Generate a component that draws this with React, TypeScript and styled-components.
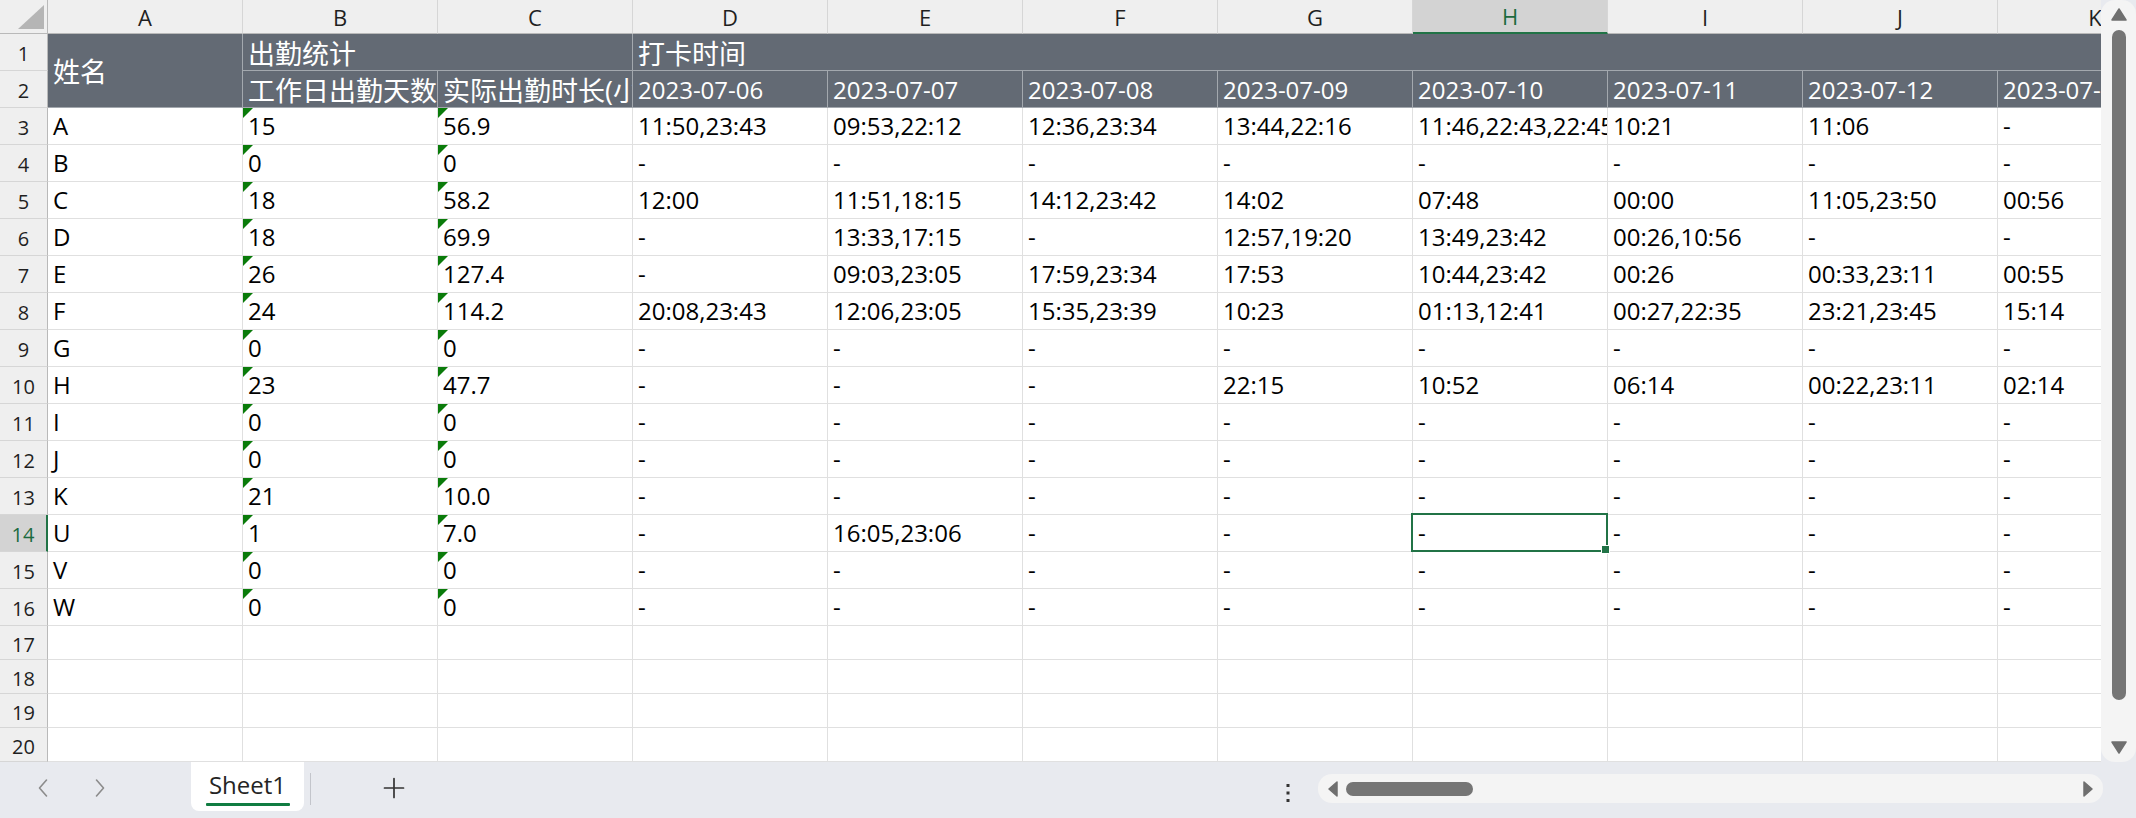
import React from "react";
import styled, { createGlobalStyle, css } from "styled-components";

const GlobalStyle = createGlobalStyle`
  html, body {
    margin: 0;
    padding: 0;
    width: 2136px;
    height: 818px;
    overflow: hidden;
    background: #ffffff;
  }
  body {
    font-family: "Open Sans", "Noto Sans CJK SC", sans-serif;
  }
  *, *::before, *::after { box-sizing: border-box; }
  button { font-family: inherit; }
`;

const GREEN = "#217346";

const Window = styled.div`
  width: 2136px;
  height: 818px;
  display: flex;
  flex-direction: column;
  background: #e8eaef;
`;

const Workspace = styled.div`
  display: flex;
  height: 762px;
  flex: none;
`;

const Viewport = styled.div`
  width: 2101px;
  height: 762px;
  overflow: hidden;
  background: #ffffff;
  flex: none;
`;

const Sheet = styled.div`
  display: grid;
  grid-template-columns: 48px repeat(11, 195px);
  grid-template-rows: 34px repeat(16, 37px) repeat(4, 34px);
  width: max-content;
`;

const cellBase = css`
  min-width: 0;
  overflow: hidden;
  white-space: nowrap;
`;

const Corner = styled.div`
  ${cellBase};
  position: relative;
  background: #efefef;
  border-right: 1px solid #b9b9b9;
  border-bottom: 1px solid #b9b9b9;
  &::after {
    content: "";
    position: absolute;
    right: 3px;
    bottom: 4px;
    border-left: 26px solid transparent;
    border-bottom: 24px solid #b5b5b5;
  }
`;

const ColHead = styled.div<{ $active?: boolean }>`
  ${cellBase};
  display: flex;
  align-items: center;
  justify-content: center;
  font-size: 22px;
  color: ${(p) => (p.$active ? "#1c6b3f" : "#1f1f1f")};
  background: ${(p) => (p.$active ? "#d3d3d3" : "#efefef")};
  border-right: 1px solid #d6d6d6;
  border-bottom: ${(p) => (p.$active ? `2px solid ${GREEN}` : "1px solid #b9b9b9")};
`;

const RowHead = styled.div<{ $active?: boolean }>`
  ${cellBase};
  display: flex;
  align-items: center;
  justify-content: center;
  font-size: 20px;
  padding-top: 3px;
  color: ${(p) => (p.$active ? "#1c6b3f" : "#1f1f1f")};
  background: ${(p) => (p.$active ? "#d3d3d3" : "#efefef")};
  border-right: ${(p) => (p.$active ? `2px solid ${GREEN}` : "1px solid #b9b9b9")};
  border-bottom: 1px solid #d6d6d6;
`;

const HeadCell = styled.div<{ $rows?: number; $cols?: number; $size?: number }>`
  ${cellBase};
  grid-row: span ${(p) => p.$rows ?? 1};
  grid-column: span ${(p) => p.$cols ?? 1};
  display: flex;
  align-items: center;
  padding-left: 5px;
  font-size: ${(p) => p.$size ?? 27}px;
  color: #ffffff;
  background: #636a74;
  border-right: 1px solid #a3a8ae;
  border-bottom: 1px solid #a3a8ae;
`;

const Cell = styled.div<{ $flag?: boolean; $selected?: boolean }>`
  ${cellBase};
  position: relative;
  padding-left: 5px;
  font-size: 24px;
  line-height: 36px;
  color: #000000;
  background: #ffffff;
  border-right: 1px solid #e0e0e0;
  border-bottom: 1px solid #e0e0e0;
  ${(p) =>
    p.$flag &&
    css`
      &::before {
        content: "";
        position: absolute;
        top: 0;
        left: 0;
        border-top: 10px solid #0a7b0a;
        border-right: 10px solid transparent;
      }
    `}
  ${(p) =>
    p.$selected &&
    css`
      overflow: visible;
      z-index: 2;
      &::after {
        content: "";
        position: absolute;
        top: -2px;
        left: -2px;
        right: -1px;
        bottom: -1px;
        border: 2px solid ${GREEN};
        pointer-events: none;
      }
    `}
`;

const CellText = styled.span`
  display: block;
  overflow: hidden;
  white-space: nowrap;
`;

const FillHandle = styled.span`
  position: absolute;
  right: -3px;
  bottom: -3px;
  width: 9px;
  height: 9px;
  background: ${GREEN};
  border: 1px solid #ffffff;
  z-index: 3;
`;

/* Vertical scrollbar */
const VScroll = styled.div`
  width: 35px;
  height: 762px;
  flex: none;
  display: flex;
  flex-direction: column;
  align-items: center;
  background: #f4f4f4;
  border-radius: 14px;
`;

const VThumb = styled.div`
  width: 14px;
  height: 670px;
  margin-top: 9px;
  border-radius: 7px;
  background: #757575;
`;

const Spacer = styled.div`
  flex: 1;
`;

const ArrowIcon = styled.svg<{ $mt?: number; $mb?: number }>`
  display: block;
  flex: none;
  margin-top: ${(p) => p.$mt ?? 0}px;
  margin-bottom: ${(p) => p.$mb ?? 0}px;
`;

/* Bottom bar */
const TabBar = styled.div`
  height: 56px;
  flex: none;
  display: flex;
  align-items: flex-start;
  background: #e8eaef;
`;

const NavGroup = styled.div`
  display: flex;
  height: 52px;
  align-items: center;
  gap: 17px;
  padding-left: 23px;
`;

const NavButton = styled.button`
  width: 40px;
  height: 40px;
  border: none;
  background: transparent;
  padding: 0;
  display: flex;
  align-items: center;
  justify-content: center;
  color: #8c8c8c;
`;

const SheetTab = styled.div`
  margin-left: 71px;
  width: 113px;
  height: 49px;
  background: #ffffff;
  border-radius: 0 0 8px 8px;
  display: flex;
  flex-direction: column;
  align-items: center;
  padding-top: 7px;
`;

const TabLabel = styled.span`
  font-size: 24px;
  line-height: 32px;
  color: #242424;
`;

const TabUnderline = styled.span`
  width: 84px;
  height: 3px;
  margin-top: 2px;
  background: #107c41;
  border-radius: 1px;
`;

const TabDivider = styled.div`
  width: 1px;
  height: 32px;
  margin-top: 11px;
  margin-left: 6px;
  background: #c3c5cb;
`;

const AddButton = styled.button`
  margin-left: 63px;
  width: 40px;
  height: 52px;
  border: none;
  background: transparent;
  padding: 0;
  display: flex;
  align-items: center;
  justify-content: center;
  color: #333333;
`;

const MoreButton = styled.button`
  width: 20px;
  height: 56px;
  margin-right: 20px;
  border: none;
  background: transparent;
  padding: 0;
  display: flex;
  align-items: center;
  justify-content: center;
  margin-top: 3px;
`;

const HScroll = styled.div`
  width: 785px;
  height: 29px;
  margin-top: 12px;
  margin-right: 33px;
  border-radius: 14px;
  background: #f4f4f4;
  display: flex;
  align-items: center;
  padding: 0 10px;
`;

const HThumb = styled.div`
  width: 127px;
  height: 14px;
  margin-left: 8px;
  border-radius: 7px;
  background: #757575;
`;

const dates = [
  "2023-07-06",
  "2023-07-07",
  "2023-07-08",
  "2023-07-09",
  "2023-07-10",
  "2023-07-11",
  "2023-07-12",
  "2023-07-13",
];

const letters = ["A", "B", "C", "D", "E", "F", "G", "H", "I", "J", "K"];

const dashes = ["-", "-", "-", "-", "-", "-", "-", "-"];

const rows: [string, string, string, string[]][] = [
  ["A", "15", "56.9", ["11:50,23:43", "09:53,22:12", "12:36,23:34", "13:44,22:16", "11:46,22:43,22:45", "10:21", "11:06", "-"]],
  ["B", "0", "0", dashes],
  ["C", "18", "58.2", ["12:00", "11:51,18:15", "14:12,23:42", "14:02", "07:48", "00:00", "11:05,23:50", "00:56"]],
  ["D", "18", "69.9", ["-", "13:33,17:15", "-", "12:57,19:20", "13:49,23:42", "00:26,10:56", "-", "-"]],
  ["E", "26", "127.4", ["-", "09:03,23:05", "17:59,23:34", "17:53", "10:44,23:42", "00:26", "00:33,23:11", "00:55"]],
  ["F", "24", "114.2", ["20:08,23:43", "12:06,23:05", "15:35,23:39", "10:23", "01:13,12:41", "00:27,22:35", "23:21,23:45", "15:14"]],
  ["G", "0", "0", dashes],
  ["H", "23", "47.7", ["-", "-", "-", "22:15", "10:52", "06:14", "00:22,23:11", "02:14"]],
  ["I", "0", "0", dashes],
  ["J", "0", "0", dashes],
  ["K", "21", "10.0", dashes],
  ["U", "1", "7.0", ["-", "16:05,23:06", "-", "-", "-", "-", "-", "-"]],
  ["V", "0", "0", dashes],
  ["W", "0", "0", dashes],
];

const SELECTED_ROW = 14;
const SELECTED_COL = "H";

const ChevronLeft = () => (
  <svg width="12" height="20" viewBox="0 0 12 20" fill="none">
    <path d="M9.5 2 L2.5 10 L9.5 18" stroke="currentColor" strokeWidth="1.6" strokeLinecap="round" strokeLinejoin="round" />
  </svg>
);

const ChevronRight = () => (
  <svg width="12" height="20" viewBox="0 0 12 20" fill="none">
    <path d="M2.5 2 L9.5 10 L2.5 18" stroke="currentColor" strokeWidth="1.6" strokeLinecap="round" strokeLinejoin="round" />
  </svg>
);

const PlusIcon = () => (
  <svg width="22" height="22" viewBox="0 0 22 22" fill="none">
    <path d="M11 1.5 V20.5 M1.5 11 H20.5" stroke="currentColor" strokeWidth="1.7" strokeLinecap="round" />
  </svg>
);

const DotsIcon = () => (
  <svg width="6" height="20" viewBox="0 0 6 20">
    <rect x="1.5" y="1" width="3" height="3" fill="#333" />
    <rect x="1.5" y="8.5" width="3" height="3" fill="#333" />
    <rect x="1.5" y="16" width="3" height="3" fill="#333" />
  </svg>
);

export default function App() {
  return (
    <>
      <GlobalStyle />
      <Window>
        <Workspace>
          <Viewport>
            <Sheet>
              <Corner />
              {letters.map((l) => (
                <ColHead key={l} $active={l === SELECTED_COL}>
                  {l}
                </ColHead>
              ))}

              <RowHead>1</RowHead>
              <HeadCell $rows={2}>姓名</HeadCell>
              <HeadCell $cols={2}>出勤统计</HeadCell>
              <HeadCell $cols={8}>打卡时间</HeadCell>

              <RowHead>2</RowHead>
              <HeadCell>工作日出勤天数</HeadCell>
              <HeadCell>实际出勤时长(小时)</HeadCell>
              {dates.map((d) => (
                <HeadCell key={d} $size={24}>
                  {d}
                </HeadCell>
              ))}

              {rows.map(([name, days, hours, times], i) => {
                const rowNo = i + 3;
                return (
                  <React.Fragment key={rowNo}>
                    <RowHead $active={rowNo === SELECTED_ROW}>{rowNo}</RowHead>
                    <Cell>{name}</Cell>
                    <Cell $flag>{days}</Cell>
                    <Cell $flag>{hours}</Cell>
                    {times.map((t, j) => {
                      const selected = rowNo === SELECTED_ROW && letters[j + 3] === SELECTED_COL;
                      return (
                        <Cell key={j} $selected={selected}>
                          <CellText>{t}</CellText>
                          {selected && <FillHandle />}
                        </Cell>
                      );
                    })}
                  </React.Fragment>
                );
              })}

              {[17, 18, 19, 20].map((r) => (
                <React.Fragment key={r}>
                  <RowHead>{r}</RowHead>
                  {letters.map((l) => (
                    <Cell key={l} />
                  ))}
                </React.Fragment>
              ))}
            </Sheet>
          </Viewport>
          <VScroll>
            <ArrowIcon $mt={8} width="16" height="13" viewBox="0 0 16 13">
              <path d="M8 1 L15 12 H1 Z" fill="#6f6f6f" stroke="#6f6f6f" strokeWidth="1.5" strokeLinejoin="round" />
            </ArrowIcon>
            <VThumb />
            <Spacer />
            <ArrowIcon $mb={8} width="16" height="13" viewBox="0 0 16 13">
              <path d="M8 12 L15 1 H1 Z" fill="#6f6f6f" stroke="#6f6f6f" strokeWidth="1.5" strokeLinejoin="round" />
            </ArrowIcon>
          </VScroll>
        </Workspace>

        <TabBar>
          <NavGroup>
            <NavButton aria-label="previous sheet">
              <ChevronLeft />
            </NavButton>
            <NavButton aria-label="next sheet">
              <ChevronRight />
            </NavButton>
          </NavGroup>
          <SheetTab>
            <TabLabel>Sheet1</TabLabel>
            <TabUnderline />
          </SheetTab>
          <TabDivider />
          <AddButton aria-label="add sheet">
            <PlusIcon />
          </AddButton>
          <Spacer />
          <MoreButton aria-label="more">
            <DotsIcon />
          </MoreButton>
          <HScroll>
            <ArrowIcon width="10" height="16" viewBox="0 0 10 16">
              <path d="M1 8 L9 1 V15 Z" fill="#6f6f6f" stroke="#6f6f6f" strokeWidth="1.5" strokeLinejoin="round" />
            </ArrowIcon>
            <HThumb />
            <Spacer />
            <ArrowIcon width="10" height="16" viewBox="0 0 10 16">
              <path d="M9 8 L1 1 V15 Z" fill="#6f6f6f" stroke="#6f6f6f" strokeWidth="1.5" strokeLinejoin="round" />
            </ArrowIcon>
          </HScroll>
        </TabBar>
      </Window>
    </>
  );
}
